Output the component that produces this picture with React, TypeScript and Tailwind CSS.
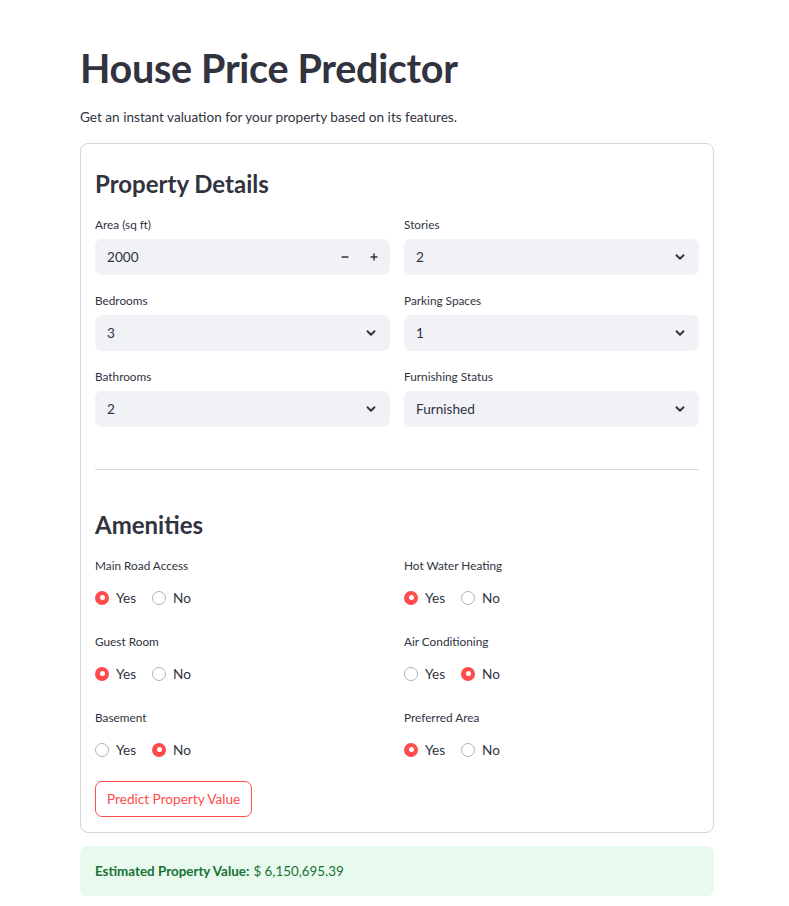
import { ChevronDown, Minus, Plus } from "lucide-react"

type Field = { label: string; value: string; kind: "number" | "select" }
type Amenity = { label: string; yes: boolean }

const leftFields: Field[] = [
  { label: "Area (sq ft)", value: "2000", kind: "number" },
  { label: "Bedrooms", value: "3", kind: "select" },
  { label: "Bathrooms", value: "2", kind: "select" },
]

const rightFields: Field[] = [
  { label: "Stories", value: "2", kind: "select" },
  { label: "Parking Spaces", value: "1", kind: "select" },
  { label: "Furnishing Status", value: "Furnished", kind: "select" },
]

const leftAmenities: Amenity[] = [
  { label: "Main Road Access", yes: true },
  { label: "Guest Room", yes: true },
  { label: "Basement", yes: false },
]

const rightAmenities: Amenity[] = [
  { label: "Hot Water Heating", yes: true },
  { label: "Air Conditioning", yes: false },
  { label: "Preferred Area", yes: true },
]

function InputField({ label, value, kind }: Field) {
  return (
    <div className="flex flex-col">
      <div className="h-[20px] flex items-center text-[11.8px] text-[#31333f]">{label}</div>
      <div className="mt-[4px] h-[36px] rounded-[7px] bg-[#f0f2f6] flex items-center pl-[12px] pr-[11px] text-[13.6px] text-[#31333f]">
        <span className="flex-1">{value}</span>
        {kind === "number" ? (
          <div className="flex items-center gap-[19px]">
            <Minus className="w-[10px] h-[10px]" strokeWidth={3.5} />
            <Plus className="w-[10px] h-[10px]" strokeWidth={3.5} />
          </div>
        ) : (
          <ChevronDown className="w-[14px] h-[14px] mr-[1px]" strokeWidth={3.2} />
        )}
      </div>
    </div>
  )
}

function Radio({ checked, label }: { checked: boolean; label: string }) {
  return (
    <div className="flex items-center gap-[7px]">
      {checked ? (
        <span className="w-[14px] h-[14px] rounded-full bg-[#ff4b4b] flex items-center justify-center">
          <span className="w-[5px] h-[5px] rounded-full bg-white" />
        </span>
      ) : (
        <span className="w-[14px] h-[14px] rounded-full border border-[#b0b2b8] bg-white" />
      )}
      <span className="text-[13.6px] text-[#31333f]">{label}</span>
    </div>
  )
}

function AmenityField({ label, yes }: Amenity) {
  return (
    <div className="flex flex-col">
      <div className="h-[20px] flex items-center text-[11.8px] text-[#31333f]">{label}</div>
      <div className="mt-[10px] h-[24px] flex items-center gap-[16px]">
        <Radio checked={yes} label="Yes" />
        <Radio checked={!yes} label="No" />
      </div>
    </div>
  )
}

export default function App() {
  return (
    <div className="min-h-[906px] bg-white font-['Lato','Source_Sans_Pro',sans-serif] text-[#31333f]">
      <div className="w-[634px] ml-[80px] pt-[42px]">
        <h1 className="text-[39.5px] font-bold leading-[52px] tracking-[-0.3px]">House Price Predictor</h1>
        <p className="mt-[13px] text-[13.6px] leading-[20px]">
          Get an instant valuation for your property based on its features.
        </p>

        <div className="mt-[16px] border border-[#d6d6d9] rounded-[8px] px-[14px] pt-[24px] pb-[15px]">
          <h3 className="h-[32px] flex items-center text-[24px] font-bold">Property Details</h3>
          <div className="mt-[15px] grid grid-cols-2 gap-x-[14px]">
            <div className="flex flex-col gap-[16px]">
              {leftFields.map((f) => (
                <InputField key={f.label} {...f} />
              ))}
            </div>
            <div className="flex flex-col gap-[16px]">
              {rightFields.map((f) => (
                <InputField key={f.label} {...f} />
              ))}
            </div>
          </div>

          <div className="mt-[42px] h-px bg-[#d9d9dc]" />

          <h3 className="mt-[39px] h-[32px] flex items-center text-[24px] font-bold">Amenities</h3>
          <div className="mt-[15px] grid grid-cols-2 gap-x-[14px]">
            <div className="flex flex-col gap-[22px]">
              {leftAmenities.map((a) => (
                <AmenityField key={a.label} {...a} />
              ))}
            </div>
            <div className="flex flex-col gap-[22px]">
              {rightAmenities.map((a) => (
                <AmenityField key={a.label} {...a} />
              ))}
            </div>
          </div>

          <button className="mt-[19px] h-[36px] px-[11px] rounded-[7px] border border-[#ff4b4b] text-[13.6px] text-[#ff4b4b] bg-white">
            Predict Property Value
          </button>
        </div>

        <div className="mt-[13px] h-[50px] rounded-[7px] bg-[#e8f9ee] flex items-center px-[15px] text-[13.4px] text-[#177233]">
          <span className="font-bold">Estimated Property Value:</span>
          <span className="ml-[4px]">$ 6,150,695.39</span>
        </div>
      </div>
    </div>
  )
}
